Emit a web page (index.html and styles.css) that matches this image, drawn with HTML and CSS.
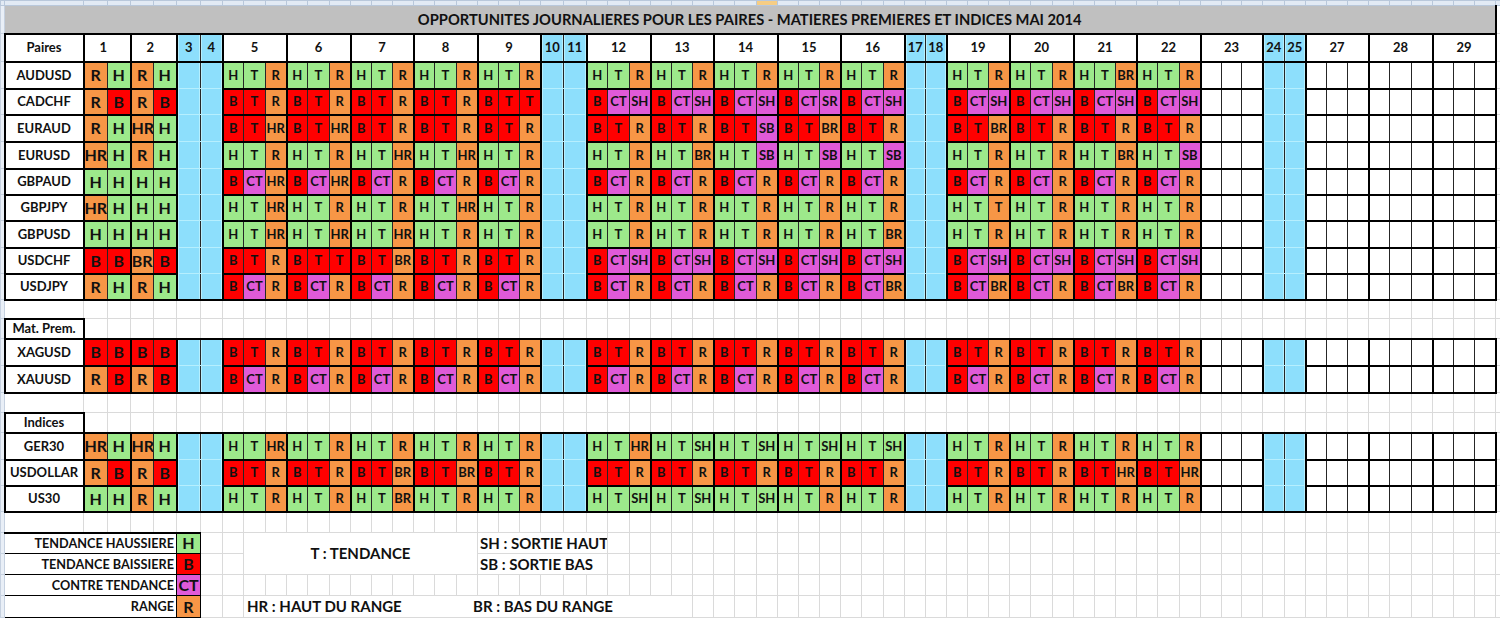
FILE: index.html
```html
<!DOCTYPE html>
<html lang="fr">
<head>
<meta charset="utf-8">
<title>Opportunités journalières - Mai 2014</title>
<link rel="stylesheet" href="styles.css">
</head>
<body>
<table class="sheet">
  <colgroup id="sheet-cols"></colgroup>
  <tbody id="sheet-body"></tbody>
</table>
<script src="script.js"></script>
</body>
</html>
```

FILE: styles.css
```css
html, body {
  margin: 0;
  padding: 0;
  background: #fff;
  overflow: hidden;
}

.sheet {
  border-collapse: collapse;
  table-layout: fixed;
  width: 1520px;
  font-family: Lato, "Liberation Sans", sans-serif;
  color: #111;
}

.sheet td {
  border: 1px solid #dadada;
  padding: 0;
  text-align: center;
  vertical-align: middle;
  white-space: nowrap;
  overflow: hidden;
  font-weight: 700;
  font-size: 13px;
  line-height: 1;
}

.sheet tr.h5 { height: 5px; }
.sheet tr.h19 { height: 19px; }
.sheet tr.h20 { height: 20px; }
.sheet tr.h21 { height: 21px; }
.sheet tr.h22 { height: 22px; }
.sheet tr.h26 { height: 26px; }
.sheet tr.h27 { height: 27px; }
.sheet tr.h28 { height: 28px; }

/* excel headers strips */
.sheet td.chd { background: #e2eaf4; border-color: #b9c8db; }
.sheet td.chd.sel { background: #f6cd84; }
.sheet td.rhd { background: #e9eff7; border-color: #c6d1e0; }

/* title */
.sheet td.ti {
  background: #c0c0c0;
  border-top: 1px solid #9a9a9a;
  border-left: 1px solid #9a9a9a;
  border-right: 2px solid #000;
  border-bottom: 2px solid #000;
  font-size: 14.7px;
}

/* bordered block cells */
.sheet td.k {
  background: #fff;
  border-top: 2px solid #000;
  border-bottom: 2px solid #000;
  border-left: 1px solid #262626;
  border-right: 1px solid #262626;
}
.sheet td.k.gs { border-left: 2px solid #000; }
.sheet td.k.ge { border-right: 2px solid #000; }
.sheet td.k.bt { border-top: 1px solid #b6effe; }
.sheet td.k.bb { border-bottom: 1px solid #b6effe; }

.sheet td.lb { font-size: 13px; }
.sheet td.hd { font-size: 13px; }
.sheet td.hdl { text-align: left; padding-left: 15px; }
.sheet td.big { font-size: 16px; }

/* legend */
.sheet td.lgl {
  border: 1px solid #000;
  text-align: right;
  padding-right: 2px;
  font-size: 12.7px;
  background: #fff;
}
.sheet td.lgc { border: 1px solid #000; font-size: 16px; }
.sheet td.top { border-top: 2px solid #000; }
.sheet td.lgt { font-size: 15px; background: #fff; }
.sheet td.lgs { text-align: left; padding-left: 2px; }
.sheet td.lgm { text-align: left; padding-left: 3px; }
.lgm .hr { display: inline-block; width: 226px; }

/* fills */
.sheet td.g { background: #9de98b; }
.sheet td.r { background: #ff0000; }
.sheet td.o { background: #f79646; }
.sheet td.m { background: #e05ad8; }
.sheet td.b { background: #8ddffc; box-shadow: inset 1px 0 0 #b6effe, inset -1px 0 0 #b6effe; }
.sheet td.w { background: #fff; }
```

FILE: script.js
```js
(function () {
  var edges = [83, 107, 130, 153, 176, 200, 222, 243, 265, 286, 307, 329, 350, 371, 392, 413,
    434, 456, 477, 498, 519, 540, 563, 586, 607, 629, 650, 671, 692, 713, 734, 756, 777,
    798, 819, 840, 861, 883, 904, 925, 946, 967, 988, 1009, 1030, 1052, 1073, 1094, 1115,
    1136, 1157, 1179, 1200, 1221, 1241, 1262, 1284, 1305, 1326, 1347, 1368, 1389, 1411,
    1432, 1453, 1474, 1495];
  var widths = [4, 79];
  for (var i = 1; i < edges.length; i++) widths.push(edges[i] - edges[i - 1]);
  widths.push(25);

  var G = [['1', 2, 'd'], ['2', 2, 'd'], ['3', 1, 'b1'], ['4', 1, 'b2'],
    ['5', 3, 'x'], ['6', 3, 'x'], ['7', 3, 'x'], ['8', 3, 'x'], ['9', 3, 'x'],
    ['10', 1, 'b1'], ['11', 1, 'b2'],
    ['12', 3, 'x'], ['13', 3, 'x'], ['14', 3, 'x'], ['15', 3, 'x'], ['16', 3, 'x'],
    ['17', 1, 'b1'], ['18', 1, 'b2'],
    ['19', 3, 'x'], ['20', 3, 'x'], ['21', 3, 'x'], ['22', 3, 'x'],
    ['23', 3, 'w'], ['24', 1, 'b1'], ['25', 1, 'b2'],
    ['27', 3, 'w'], ['28', 3, 'w'], ['29', 3, 'w']];

  var A = 'Hg Tg Ro', BT = 'Br Tr Ro', BC = 'Br CTm Ro', BS = 'Br CTm SHm', SG = 'Hg Tg SHg';
  function r() {
    return Array.prototype.slice.call(arguments).join(' ').split(/\s+/).filter(Boolean);
  }

  var block1 = [
    ['AUDUSD', r('Ro Hg', 'Ro Hg', A, A, A, A, A, A, A, A, A, A, A, A, 'Hg Tg BRo', A)],
    ['CADCHF', r('Ro Br', 'Ro Br', BT, BT, BT, BT, 'Br Tr Tr', BS, BS, BS, 'Br CTm SRm', BS, BS, BS, BS, BS)],
    ['EURAUD', r('Ro Hg', 'HRo Hg', 'Br Tr HRo', 'Br Tr HRo', BT, BT, BT, BT, BT, 'Br Tr SBm', 'Br Tr BRo', BT, 'Br Tr BRo', BT, BT, BT)],
    ['EURUSD', r('HRo Hg', 'Ro Hg', A, A, 'Hg Tg HRo', 'Hg Tg HRo', A, A, 'Hg Tg BRo', 'Hg Tg SBm', 'Hg Tg SBm', 'Hg Tg SBm', A, A, 'Hg Tg BRo', 'Hg Tg SBm')],
    ['GBPAUD', r('Hg Hg', 'Hg Hg', 'Br CTm HRo', 'Br CTm HRo', BC, BC, BC, BC, BC, BC, BC, BC, BC, BC, BC, BC)],
    ['GBPJPY', r('HRo Hg', 'Hg Hg', 'Hg Tg HRo', A, A, 'Hg Tg HRo', A, A, A, A, A, A, 'Hg Tg To', A, A, A)],
    ['GBPUSD', r('Hg Hg', 'Hg Hg', 'Hg Tg HRo', 'Hg Tg HRo', 'Hg Tg HRo', A, A, A, A, A, A, 'Hg Tg BRo', A, A, A, A)],
    ['USDCHF', r('Br Br', 'BRo Br', BT, 'Br Tr Tr', 'Br Tr BRo', BT, BT, BS, BS, BS, BS, BS, BS, BS, BS, BS)],
    ['USDJPY', r('Ro Hg', 'Ro Hg', BC, BC, BC, BC, BC, BC, BC, BC, BC, 'Br CTm BRo', 'Br CTm BRo', BC, 'Br CTm BRo', BC)]
  ];
  var block2 = [
    ['XAGUSD', r('Br Br', 'Br Br', BT, BT, BT, BT, BT, BT, BT, BT, BT, BT, BT, BT, BT, BT)],
    ['XAUUSD', r('Ro Br', 'Ro Br', BC, BC, BC, BC, BC, BC, BC, BC, BC, BC, BC, BC, BC, BC)]
  ];
  var block3 = [
    ['GER30', r('HRo Hg', 'HRo Hg', 'Hg Tg HRo', A, A, A, A, 'Hg Tg HRo', SG, SG, SG, SG, A, A, A, A)],
    ['USDOLLAR', r('Ro Br', 'Ro Br', BT, BT, 'Br Tr BRo', 'Br Tr BRo', BT, BT, BT, BT, BT, BT, BT, BT, 'Br Tr HRo', 'Br Tr HRo')],
    ['US30', r('Hg Hg', 'Ro Hg', A, A, 'Hg Tg BRo', A, A, SG, SG, SG, A, A, A, A, A, A)]
  ];

  var body = document.getElementById('sheet-body');
  var cg = document.getElementById('sheet-cols');
  widths.forEach(function (w) {
    var c = document.createElement('col');
    c.style.width = w + 'px';
    cg.appendChild(c);
  });

  function row(h) {
    var tr = document.createElement('tr');
    tr.className = 'h' + h;
    body.appendChild(tr);
    return tr;
  }
  function cell(tr, cls, text, span, rspan) {
    var td = document.createElement('td');
    if (cls) td.className = cls;
    if (text != null) td.textContent = text;
    if (span > 1) td.colSpan = span;
    if (rspan > 1) td.rowSpan = rspan;
    tr.appendChild(td);
    return td;
  }
  function grid(tr, n) { for (var i = 0; i < n; i++) cell(tr, ''); }
  function rh(tr) { cell(tr, 'rhd'); }
  function gap(h) { var tr = row(h); rh(tr); grid(tr, 68); }
  function sec(text, h) { var tr = row(h); rh(tr); cell(tr, 'k gs ge lb', text); grid(tr, 67); }

  function block(rows, heights) {
    rows.forEach(function (rw, ri) {
      var first = ri === 0, last = ri === rows.length - 1;
      var tr = row(heights[ri]);
      rh(tr);
      cell(tr, 'k gs ge lb', rw[0]);
      var toks = rw[1], ti = 0;
      G.forEach(function (g) {
        var t = g[2], c;
        if (t === 'b1' || t === 'b2') {
          c = 'k b ' + (t === 'b1' ? 'gs' : 'ge');
          if (!first) c += ' bt';
          if (!last) c += ' bb';
          cell(tr, c);
          return;
        }
        for (var j = 0; j < g[1]; j++) {
          c = 'k';
          if (j === 0) c += ' gs';
          if (j === g[1] - 1) c += ' ge';
          if (t === 'w') { cell(tr, c + ' w'); continue; }
          var tok = toks[ti++] || 'w';
          cell(tr, c + ' ' + tok.slice(-1) + (t === 'd' ? ' big' : ''), tok.slice(0, -1));
        }
      });
      grid(tr, 1);
    });
  }

  /* column header strip */
  var tr = row(5);
  for (var k = 0; k < widths.length; k++) cell(tr, k === 33 ? 'chd sel' : 'chd');

  /* title */
  tr = row(28);
  rh(tr);
  cell(tr, 'ti', 'OPPORTUNITES JOURNALIERES POUR LES PAIRES - MATIERES PREMIERES ET INDICES MAI 2014', 67);
  grid(tr, 1);

  /* day header */
  tr = row(28);
  rh(tr);
  cell(tr, 'k gs ge lb', 'Paires');
  G.forEach(function (g) {
    var t = g[2];
    if (t === 'b1') cell(tr, 'k gs b hd', g[0]);
    else if (t === 'b2') cell(tr, 'k ge b hd', g[0]);
    else cell(tr, 'k gs ge hd' + (t === 'd' ? ' hdl' : ''), g[0], g[1]);
  });
  grid(tr, 1);

  block(block1, [27, 26, 27, 27, 26, 26, 27, 26, 26]);
  gap(19);
  sec('Mat. Prem.', 20);
  block(block2, [27, 27]);
  gap(20);
  sec('Indices', 20);
  block(block3, [27, 26, 26]);
  gap(21);

  /* legend */
  tr = row(21);
  rh(tr);
  cell(tr, 'lgl top', 'TENDANCE HAUSSIERE', 5);
  cell(tr, 'lgc top g', 'H');
  grid(tr, 2);
  cell(tr, 'lgt', 'T : TENDANCE', 11, 2);
  cell(tr, 'lgt lgs', 'SH : SORTIE HAUT', 6);
  grid(tr, 43);

  tr = row(21);
  rh(tr);
  cell(tr, 'lgl', 'TENDANCE BAISSIERE', 5);
  cell(tr, 'lgc r', 'B');
  grid(tr, 2);
  cell(tr, 'lgt lgs', 'SB : SORTIE BAS', 6);
  grid(tr, 43);

  tr = row(21);
  rh(tr);
  cell(tr, 'lgl', 'CONTRE TENDANCE', 5);
  cell(tr, 'lgc m', 'CT');
  grid(tr, 62);

  tr = row(22);
  rh(tr);
  cell(tr, 'lgl', 'RANGE', 5);
  cell(tr, 'lgc o', 'R');
  grid(tr, 2);
  var m = cell(tr, 'lgt lgm', null, 21);
  var s1 = document.createElement('span');
  s1.className = 'hr';
  s1.textContent = 'HR : HAUT DU RANGE';
  var s2 = document.createElement('span');
  s2.textContent = 'BR : BAS DU RANGE';
  m.appendChild(s1);
  m.appendChild(s2);
  grid(tr, 39);

  gap(21);
})();
```
